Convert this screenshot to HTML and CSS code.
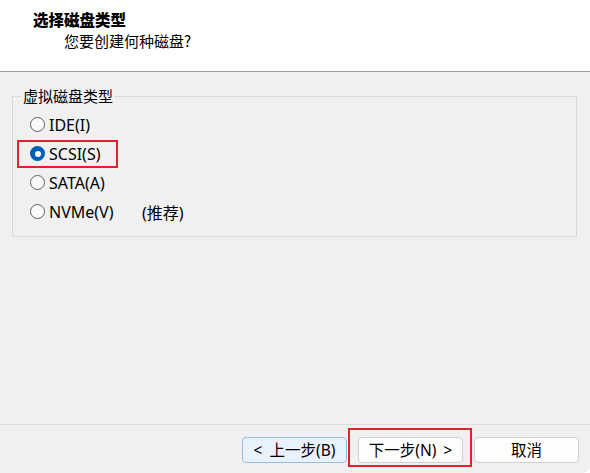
FILE: index.html
```html
<!DOCTYPE html>
<html lang="zh-CN">
<head>
    <meta charset="UTF-8">
    <title>新建虚拟机向导</title>
    <link rel="stylesheet" href="styles.css">
</head>
<body>
    <div class="window">
        <header class="wizard-head">
            <div class="head-title">选择磁盘类型</div>
            <div class="head-sub">您要创建何种磁盘?</div>
        </header>

        <section class="wizard-body">
            <fieldset class="group">
                <legend>虚拟磁盘类型</legend>
                <div class="radio-list">
                    <div class="radio-row">
                        <label class="radio">
                            <span class="dot"></span>
                            <span class="radio-text">IDE(I)</span>
                        </label>
                    </div>
                    <div class="radio-row">
                        <label class="radio picked">
                            <span class="dot checked"></span>
                            <span class="radio-text">SCSI(S)</span>
                        </label>
                    </div>
                    <div class="radio-row">
                        <label class="radio">
                            <span class="dot"></span>
                            <span class="radio-text">SATA(A)</span>
                        </label>
                    </div>
                    <div class="radio-row">
                        <label class="radio">
                            <span class="dot"></span>
                            <span class="radio-text wide">NVMe(V)</span>
                        </label>
                        <span class="note">(推荐)</span>
                    </div>
                </div>
            </fieldset>
        </section>

        <footer class="wizard-foot">
            <button class="btn btn-default">&lt; 上一步(B)</button>
            <span class="picked-btn">
                <button class="btn">下一步(N) &gt;</button>
            </span>
            <button class="btn btn-cancel">取消</button>
        </footer>
    </div>
</body>
</html>
```

FILE: styles.css
```css
* {
    box-sizing: border-box;
}

html, body {
    margin: 0;
    padding: 0;
    background-color: #ffffff;
}

body {
    font-family: "Noto Sans", "Noto Sans CJK SC", sans-serif;
    font-size: 15px;
    color: #000000;
}

.window {
    width: 590px;
    height: 473px;
    display: flex;
    flex-direction: column;
    background-color: #f0f0f0;
    border-bottom-right-radius: 8px;
    overflow: hidden;
}

.wizard-head {
    height: 72px;
    padding-top: 9px;
    background-color: #ffffff;
    border-bottom: 1px solid #a0a0a0;
}

.head-title {
    margin-left: 33px;
    font-family: "Noto Sans CJK SC", sans-serif;
    font-weight: 900;
    font-size: 15.5px;
    line-height: 20px;
}

.head-sub {
    margin-left: 64px;
    margin-top: 2px;
    font-family: "Noto Sans CJK SC", sans-serif;
    font-size: 15px;
    line-height: 20px;
}

.wizard-body {
    flex: 1;
    padding: 14px 13px 0 12px;
    border-bottom: 1px solid #dcdcdc;
}

.group {
    margin: 0;
    padding: 0;
    height: 151px;
    border: 1px solid #dadada;
    min-width: 0;
}

.group legend {
    margin-left: 8px;
    padding: 0 2px;
    font-family: "Noto Sans CJK SC", sans-serif;
    line-height: 20px;
}

.radio-list {
    padding-top: 4px;
    padding-left: 17px;
}

.radio-row {
    height: 29px;
    display: flex;
    align-items: center;
}

.radio {
    height: 28px;
    display: inline-flex;
    align-items: center;
}

.radio-text {
    font-size: 16px;
}

.dot {
    flex-shrink: 0;
    width: 15px;
    height: 15px;
    border: 1px solid #5f5f5f;
    border-radius: 50%;
    background-color: #f9f9f9;
    margin-right: 4px;
    display: flex;
    align-items: center;
    justify-content: center;
}

.dot.checked {
    border: none;
    background-color: #005fb8;
}

.dot.checked::after {
    content: "";
    width: 6px;
    height: 6px;
    border-radius: 50%;
    background-color: #ffffff;
}

.picked {
    margin-left: -13px;
    padding: 0 15px 0 11px;
    border: 2px solid #e3202b;
}

.radio-text.wide {
    min-width: 93px;
}

.note {
    font-size: 16px;
}

.wizard-foot {
    height: 48px;
    display: flex;
    align-items: flex-start;
    justify-content: flex-end;
    padding: 3px 11px 0 0;
}

.btn {
    width: 105px;
    height: 26px;
    padding: 0;
    font-family: "Noto Sans", "Noto Sans CJK SC", sans-serif;
    font-size: 15.5px;
    line-height: 24px;
    word-spacing: 3px;
    color: #000000;
    background-color: #fdfdfd;
    border: 1px solid #d0d0d0;
    border-radius: 4px;
}

.btn-default {
    margin-top: 9px;
    background-color: #e9f2fb;
    border-color: #90bfea;
}

.btn-cancel {
    margin-top: 9px;
    margin-left: 2px;
}

.picked-btn {
    margin-left: 1px;
    padding: 7px 7px 2px 8px;
    border: 2px solid #e3202b;
    display: flex;
}
```
